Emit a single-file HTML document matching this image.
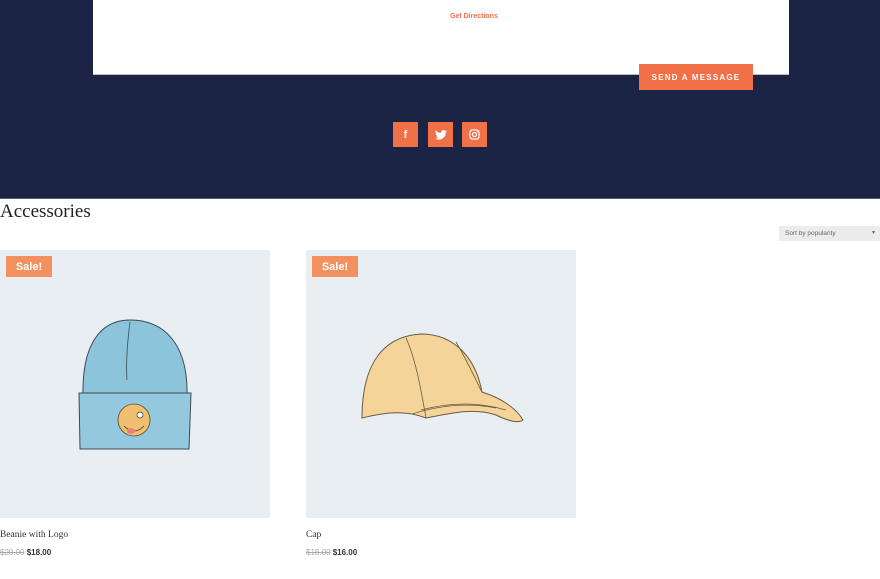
<!DOCTYPE html>
<html><head><meta charset="utf-8"><style>
*{margin:0;padding:0;box-sizing:border-box}
body{width:880px;height:579px;overflow:hidden;background:#fff;font-family:"Liberation Sans",sans-serif;position:relative}
.navy{position:absolute;left:0;top:0;width:880px;height:199px;background:#1b2444;border-bottom:1px solid #5a6375}
.card{position:absolute;left:93px;top:0;width:696px;height:75px;background:#fff;border-bottom:1px solid #bbb}
.gd{position:absolute;left:450px;top:13px;font-size:7px;color:#f07048;font-weight:bold}
.btn{position:absolute;left:639px;top:64px;width:114px;height:26px;background:#f07048;color:#fff;font-size:8px;font-weight:bold;letter-spacing:1.2px;text-align:center;line-height:27px}
.ic{position:absolute;top:122px;width:25px;height:25px;background:#f07048;color:#fff;display:flex;align-items:center;justify-content:center;font-weight:bold;font-size:11px}
h1{position:absolute;left:0;top:201px;font-family:"Liberation Serif",serif;font-weight:normal;font-size:19px;color:#222}
.sort{position:absolute;left:779px;top:226px;width:101px;height:15px;background:#ececec;font-size:6.5px;color:#666;line-height:15px;padding-left:6px}
.sort span{position:absolute;right:4px;font-size:5px}
.prod{position:absolute;top:250px;width:270px;height:268px;background:#e8eef2}
.sale{position:absolute;left:6px;top:6px;width:46px;height:21px;background:#f2905e;color:#fff;font-size:11px;font-weight:bold;text-align:center;line-height:22px}
.nm{position:absolute;top:530px;font-family:"Liberation Serif",serif;font-size:9.5px;color:#333}
.pr{position:absolute;top:548px;font-size:8px;font-weight:bold;color:#333}
.pr s{color:#aaa;font-weight:normal}
</style></head><body>
<div class="navy"></div>
<div class="card"></div>
<div class="gd">Get Directions</div>
<div class="btn">SEND A MESSAGE</div>
<div class="ic" style="left:393px">f</div>
<div class="ic" style="left:428px"><svg width="12" height="10" viewBox="0 0 24 20"><path d="M24 2.4c-.9.4-1.8.6-2.8.8 1-.6 1.8-1.6 2.2-2.7-1 .6-2 1-3.1 1.2A4.9 4.9 0 0 0 11.9 6 14 14 0 0 1 1.7.8a4.9 4.9 0 0 0 1.5 6.6c-.8 0-1.6-.2-2.2-.6 0 2.4 1.700 4.4 3.9 4.8-.7.2-1.5.2-2.2.1.6 2 2.4 3.4 4.6 3.4A9.9 9.9 0 0 1 0 17.1 14 14 0 0 0 7.5 19.3c9.1 0 14-7.5 14-14v-.6c1-.7 1.8-1.6 2.5-2.3z" fill="#fff"/></svg></div>
<div class="ic" style="left:462px"><svg width="11" height="11" viewBox="0 0 12 12"><rect x="1" y="1" width="10" height="10" rx="3" fill="none" stroke="#fff" stroke-width="1.3"/><circle cx="6" cy="6" r="2.2" fill="none" stroke="#fff" stroke-width="1.3"/><circle cx="9" cy="3" r=".7" fill="#fff"/></svg></div>
<h1>Accessories</h1>
<div class="sort">Sort by popularity<span>▼</span></div>
<div class="prod" style="left:0"><div class="sale">Sale!</div>
<svg style="position:absolute;left:0;top:0" width="270" height="268">
<path d="M83 145 C82 95 100 70 130 70 C165 70 188 95 187 145 Z" fill="#8cc4dc" stroke="#3d4a50" stroke-width="1"/>
<path d="M130 72 C127 95 126 115 127 130" fill="none" stroke="#3d4a50" stroke-width="0.8"/>
<path d="M79 143 L191 143 L189 199 L80 199 Z" fill="#93c8de" stroke="#3d4a50" stroke-width="1"/>
<circle cx="134" cy="170" r="16" fill="#f0c070" stroke="#5a4a30" stroke-width="0.8"/>
<circle cx="140" cy="165" r="3" fill="#fff" stroke="#333" stroke-width="0.7"/>
<path d="M124 176 Q134 186 144 176" fill="none" stroke="#333" stroke-width="0.8"/>
<ellipse cx="131" cy="181" rx="4" ry="3" fill="#e88080"/>
</svg></div>
<div class="prod" style="left:306px"><div class="sale">Sale!</div>
<svg style="position:absolute;left:0;top:0" width="270" height="268">
<path d="M56 168 C56 110 80 86 115 84 C150 84 170 110 176 142 C195 148 210 158 217 170 C212 174 200 170 190 165 C170 158 150 162 120 168 C100 160 80 162 56 168 Z" fill="#f5d49a" stroke="#6a5a40" stroke-width="1"/>
<path d="M100 88 C110 110 115 140 120 168 M150 92 C162 112 172 135 176 142" fill="none" stroke="#6a5a40" stroke-width="0.8"/>
<path d="M106 164 Q150 150 190 158 M115 160 Q160 148 200 160" fill="none" stroke="#6a5a40" stroke-width="0.7"/>
</svg></div>
<div class="nm" style="left:0">Beanie with Logo</div>
<div class="pr" style="left:0"><s>$20.00</s> $18.00</div>
<div class="nm" style="left:306px">Cap</div>
<div class="pr" style="left:306px"><s>$18.00</s> $16.00</div>
</body></html>
